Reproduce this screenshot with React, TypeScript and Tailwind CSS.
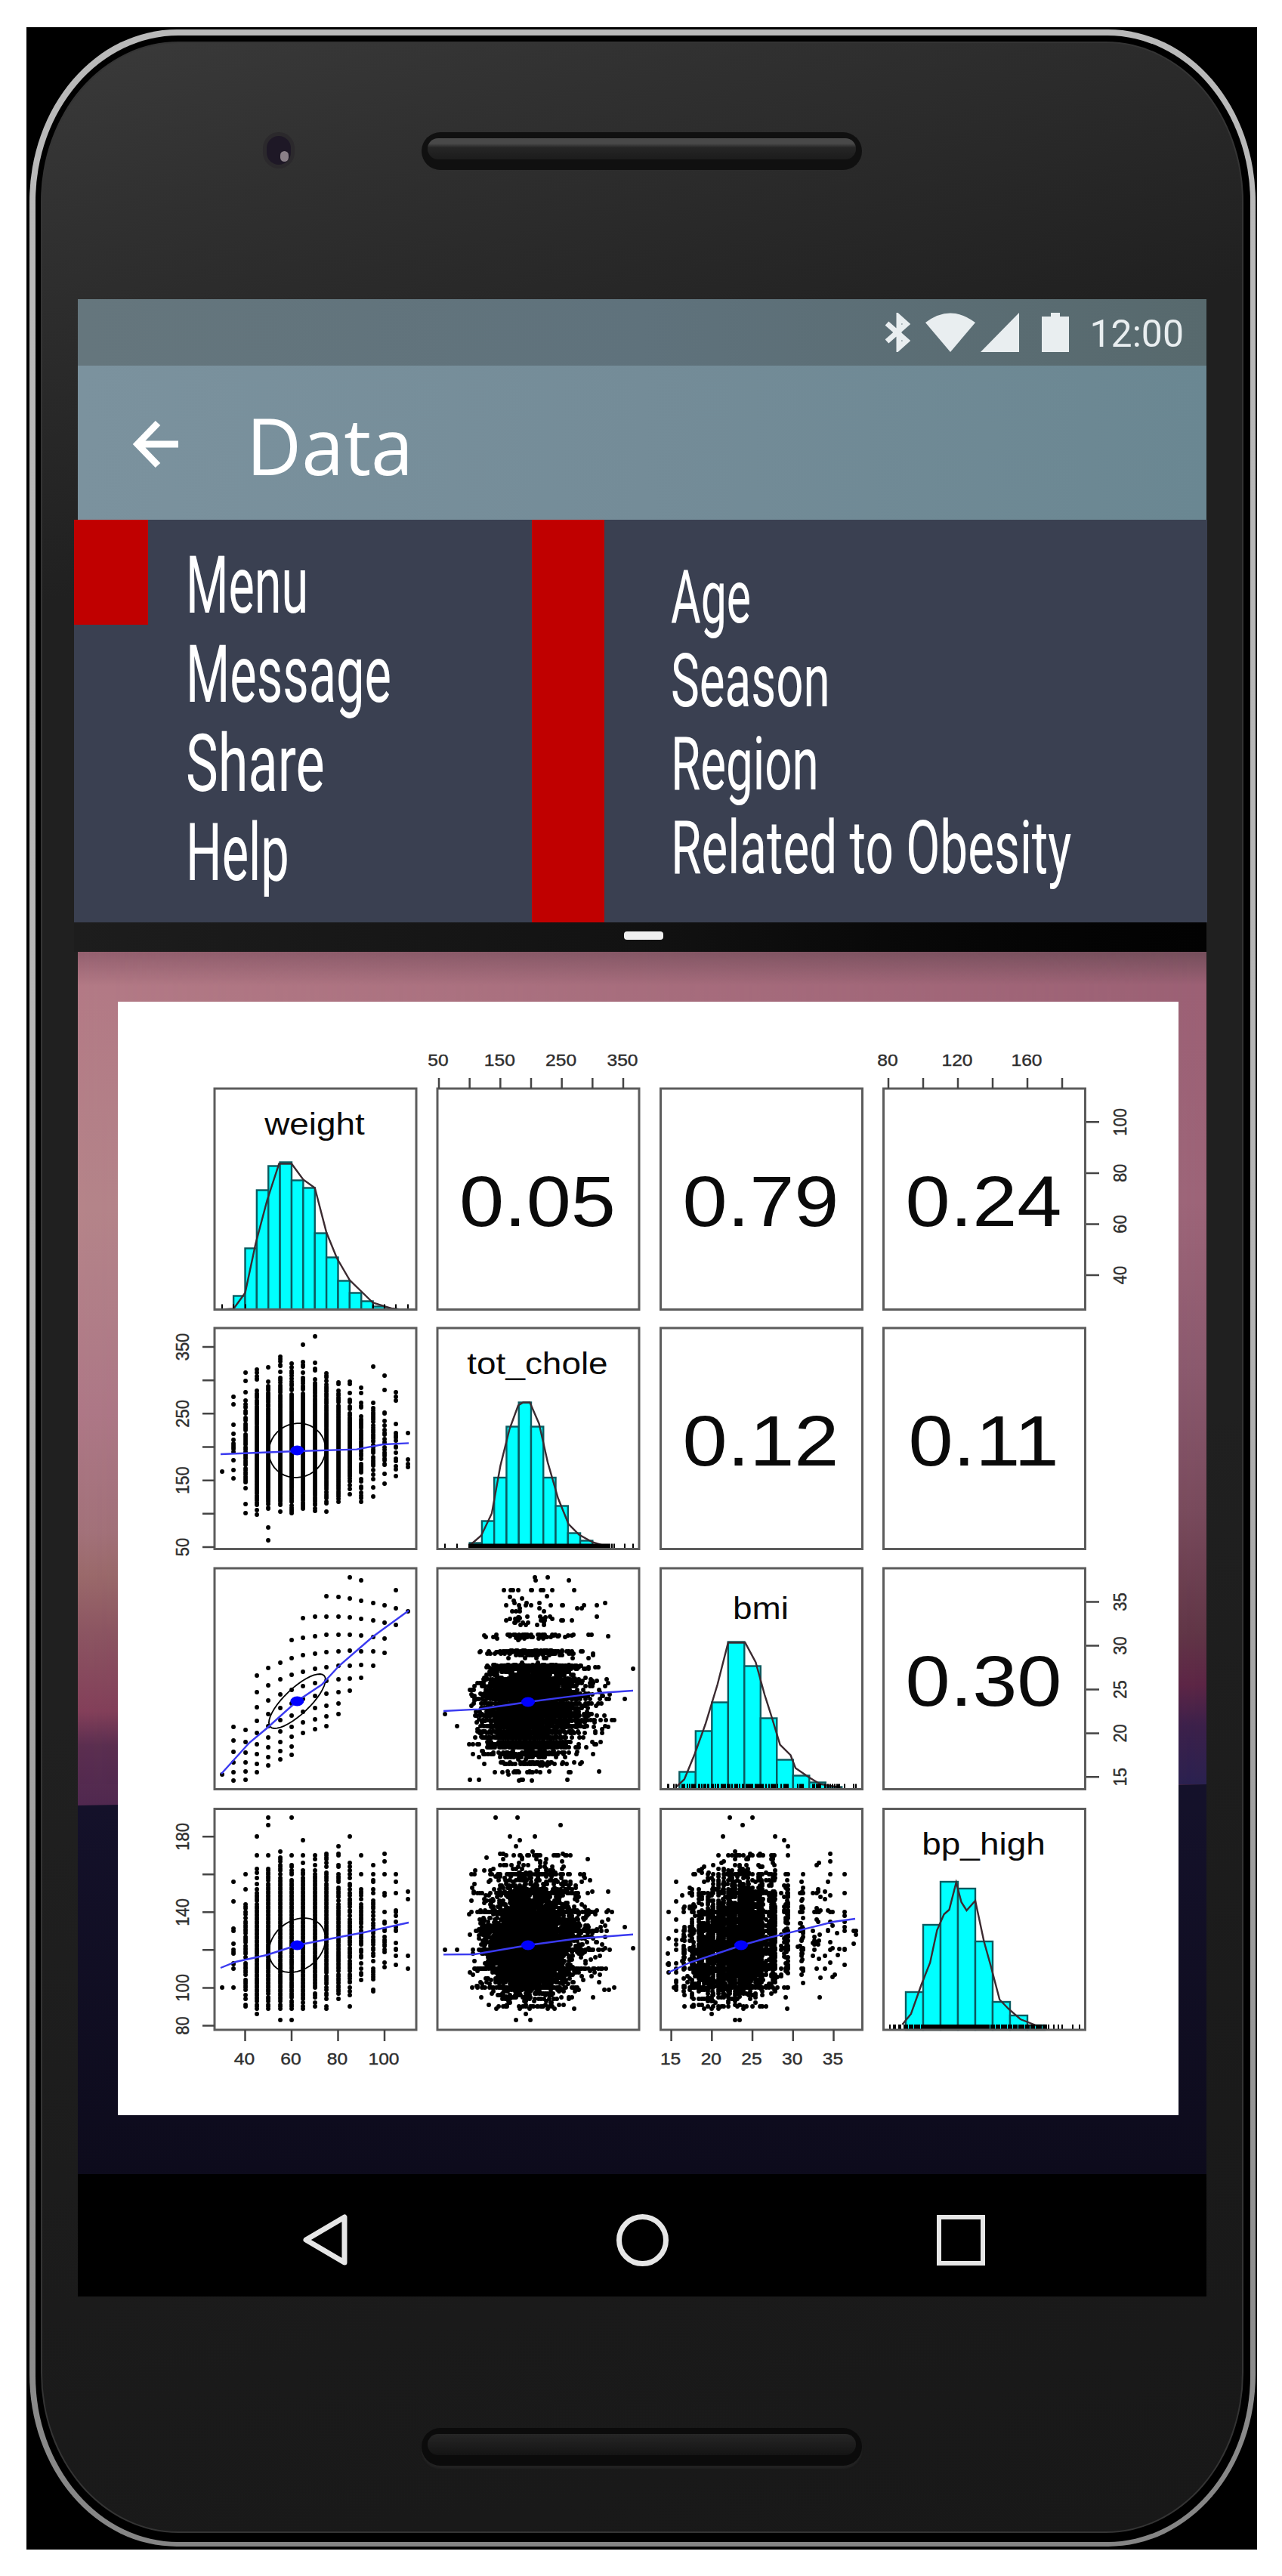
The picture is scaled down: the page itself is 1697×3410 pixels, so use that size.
/**
 * Phone mock-up of the "Data" screen: status bar, app bar, the two-column
 * filter menu and the health check-up correlation matrix underneath.
 */

import type { ReactNode } from 'react';

type Point = [number, number];

interface Subject {
  weight: number;
  height: number;
  chole: number;
  bp: number;
}

/* ---------------------------------------------------------------- data */

/** Small deterministic generator so that the plots never change. */
function createRandom(seed: number) {
  let s = seed;
  return () => {
    s = (s + 0x6d2b79f5) | 0;
    let t = Math.imul(s ^ (s >>> 15), 1 | s);
    t = (t + Math.imul(t ^ (t >>> 7), 61 | t)) ^ t;
    return ((t ^ (t >>> 14)) >>> 0) / 4294967296;
  };
}

/** weight → [shortest, tallest] in cm. Both are recorded in steps of 5. */
const HEIGHT_RANGE: Record<number, Point> = {
  30: [140, 140],
  35: [130, 155],
  40: [140, 165],
  45: [130, 170],
  50: [135, 175],
  55: [140, 180],
  60: [140, 185],
  65: [140, 180],
  70: [145, 185],
  75: [145, 190],
  80: [150, 190],
  85: [150, 185],
  90: [155, 185],
  95: [165, 185],
  100: [170, 185],
  105: [170, 180],
  110: [180, 180],
};

/** People per weight class, 35 kg upwards. */
const WEIGHT_COUNTS = [10, 90, 420, 780, 960, 1020, 900, 800, 480, 280, 140, 75, 60, 22, 14, 3];

const OUTLIERS: Subject[] = [
  { weight: 30, height: 140, chole: 163, bp: 100 },
  { weight: 110, height: 180, chole: 221, bp: 151 },
  { weight: 50, height: 155, chole: 80, bp: 120 },
  { weight: 50, height: 150, chole: 60, bp: 120 },
  { weight: 50, height: 150, chole: 142, bp: 190 },
  { weight: 50, height: 145, chole: 248, bp: 186 },
  { weight: 60, height: 155, chole: 178, bp: 190 },
  { weight: 45, height: 145, chole: 165, bp: 180 },
  { weight: 85, height: 175, chole: 206, bp: 180 },
  { weight: 80, height: 165, chole: 175, bp: 175 },
  { weight: 65, height: 150, chole: 182, bp: 178 },
  { weight: 70, height: 160, chole: 366, bp: 121 },
  { weight: 65, height: 165, chole: 353, bp: 132 },
  { weight: 90, height: 155, chole: 262, bp: 130 },
  { weight: 85, height: 150, chole: 206, bp: 128 },
  { weight: 105, height: 170, chole: 200, bp: 120 },
  { weight: 95, height: 165, chole: 321, bp: 133 },
  { weight: 55, height: 155, chole: 176, bp: 83 },
  { weight: 60, height: 160, chole: 199, bp: 83 },
  { weight: 45, height: 150, chole: 192, bp: 86 },
];

function buildSubjects(): Subject[] {
  const random = createRandom(20207);
  const normal = () =>
    Math.sqrt(-2 * Math.log(random() + 1e-9)) * Math.cos(2 * Math.PI * random());
  const list: Subject[] = [...OUTLIERS];

  WEIGHT_COUNTS.forEach((count, i) => {
    const weight = 35 + i * 5;
    const [lo, hi] = HEIGHT_RANGE[weight];
    for (let h = lo; h <= hi; h += 5) {
      const bp = Math.min(150, Math.max(95, 120 + normal() * 12));
      list.push({ weight, height: h, chole: 190 + normal() * 25, bp });
    }
    const typical = Math.min(hi - 7, 148 + (weight - 35) * 0.58);
    for (let n = 0; n < count; n++) {
      const raw = Math.round((typical + normal() * 6) / 5) * 5;
      const height = Math.min(hi, Math.max(lo, raw));
      const bmi = weight / (height / 100) ** 2;
      const chole = 187 + (bmi - 23.5) * 1.1 + normal() * 32 + Math.max(0, normal() * 32);
      let bp = 119.5 + (bmi - 23.5) * 1.2 + normal() * 12.5 + Math.max(0, normal() * 15);
      bp = random() < 0.4 ? Math.round(bp / 10) * 10 : Math.round(bp);
      if (chole < 98 || chole > 345 || bp < 89 || bp > 172) continue;
      if (bp === 90 && random() < 0.4) continue;
      list.push({ weight, height, chole: Math.round(chole), bp });
    }
  });
  return list;
}

const subjects = buildSubjects();
const bmiOf = (s: Subject) => s.weight / (s.height / 100) ** 2;

/* -------------------------------------------------------------- scales */

const COLS = [283, 578, 873.5, 1168.5];
const ROWS = [1441, 1758, 2076, 2394.5];
const PANEL_W = 267;
const PANEL_H = 292.5;

const xWeight = (v: number) => 323.5 + (v - 40) * 3.075;
const xChole = (v: number) => 580 + (v - 50) * 0.8133;
const xBmi = (v: number) => 887.6 + (v - 15) * 10.745;
const xBp = (v: number) => 1175 + (v - 80) * 2.3;
const yWeight = (v: number) => 1688 - (v - 40) * 3.378;
const yChole = (v: number) => 2048 - (v - 50) * 0.8833;
const yBmi = (v: number) => 2352.3 - (v - 15) * 11.585;
const yBp = (v: number) => 2681.4 - (v - 80) * 2.501;

/* ------------------------------------------------------------ matrix parts */

function Label({ x, y, size = 22, turn = false, children }: {
  x: number;
  y: number;
  size?: number;
  turn?: boolean;
  children: ReactNode;
}) {
  return (
    <text
      transform={`translate(${x} ${y}) scale(1.12 1)${turn ? ' rotate(-90)' : ''}`}
      fontSize={size}
      textAnchor="middle"
      fill={size < 30 ? '#2e2e2e' : '#0a0a0a'}
      stroke={size < 30 ? '#2e2e2e' : 'none'}
      strokeWidth="0.4"
    >
      {children}
    </text>
  );
}

interface HistogramProps {
  title: string;
  titleY: number;
  index: number;
  scale: (v: number) => number;
  start: number;
  step: number;
  bars: number[];
  curve: Point[];
  rug: number[];
}

function Histogram({ title, titleY, index, scale, start, step, bars, curve, rug }: HistogramProps) {
  const base = ROWS[index] + PANEL_H;
  const width = scale(step) - scale(0);
  const marks = [...new Set(rug.map((v) => Math.round(scale(v))))];
  return (
    <g>
      {bars.map((h, i) => (
        <rect
          key={i}
          x={scale(start + i * step)}
          y={base - h}
          width={width}
          height={h}
          fill="#00ffff"
          stroke="#0b5b60"
          strokeWidth="2.4"
        />
      ))}
      <polyline
        points={curve.map(([v, h]) => `${scale(v)},${base - h}`).join(' ')}
        fill="none"
        stroke="#3b2a30"
        strokeWidth="2.4"
      />
      <path d={marks.map((x) => `M${x} ${base}v-7`).join('')} stroke="#000" strokeWidth="2" />
      <Label x={COLS[index] + PANEL_W / 2 - 1} y={titleY} size={41}>{title}</Label>
    </g>
  );
}

interface ScatterProps {
  x: (s: Subject) => number;
  y: (s: Subject) => number;
  trend: Point[];
  center: Point;
  rho: number;
}

function Scatter({ x, y, trend, center, rho }: ScatterProps) {
  const dots = [...new Set(subjects.map((s) => `M${x(s).toFixed(0)} ${y(s).toFixed(0)}h.1`))];
  const phase = Math.acos(rho);
  const ellipse = Array.from({ length: 41 }, (_, i) => {
    const t = (i / 40) * Math.PI * 2;
    return `${center[0] + 37.5 * Math.cos(t)},${center[1] - 36 * Math.cos(t - phase)}`;
  });
  return (
    <g fill="none">
      <path d={dots.join('')} stroke="#000" strokeWidth="5.8" strokeLinecap="round" />
      <polygon points={ellipse.join(' ')} stroke="#000" strokeWidth="1.8" />
      <polyline points={trend.map((p) => p.join(',')).join(' ')} stroke="#3a3af0" strokeWidth="2.4" />
      <ellipse cx={center[0]} cy={center[1]} rx="9" ry="6.5" fill="#0000ff" />
    </g>
  );
}

const CORRELATIONS = [
  { row: 0, col: 1, value: '0.05' },
  { row: 0, col: 2, value: '0.79' },
  { row: 0, col: 3, value: '0.24' },
  { row: 1, col: 2, value: '0.12' },
  { row: 1, col: 3, value: '0.11' },
  { row: 2, col: 3, value: '0.30' },
];

interface AxisProps {
  side: 'top' | 'bottom' | 'left' | 'right';
  scale: (v: number) => number;
  ticks: number[];
  labels: number[];
}

function Axis({ side, scale, ticks, labels }: AxisProps) {
  const tick = (v: number) => {
    const p = scale(v);
    if (side === 'top') return `M${p} 1441v-14`;
    if (side === 'bottom') return `M${p} 2687v15`;
    if (side === 'left') return `M283 ${p}h-16`;
    return `M1437 ${p}h17`;
  };
  const place = (v: number): Point => {
    const p = scale(v);
    if (side === 'top') return [p - 1, 1411];
    if (side === 'bottom') return [p - 1, 2733];
    return [side === 'left' ? 249 : 1490, p];
  };
  return (
    <g>
      <path d={ticks.map(tick).join('')} stroke="#444" strokeWidth="2.5" />
      {labels.map((v) => {
        const [x, y] = place(v);
        return (
          <Label key={v} x={x} y={y} turn={side === 'left' || side === 'right'}>{v}</Label>
        );
      })}
    </g>
  );
}

function CorrelationMatrix() {
  return (
    <svg
      viewBox="155 1326 1404 1474"
      className="block h-[1474px] w-[1404px] bg-white font-['Liberation_Sans',sans-serif]"
    >
      <Scatter
        x={(s) => xWeight(s.weight)}
        y={(s) => yChole(s.chole)}
        center={[392.4, 1920]}
        rho={0.05}
        trend={[[291, 1925], [392, 1921], [471, 1918.6], [506, 1912], [540, 1910.4]]}
      />
      <Scatter
        x={(s) => xWeight(s.weight)}
        y={(s) => yBmi(bmiOf(s))}
        center={[392.4, 2252]}
        rho={0.79}
        trend={[[292, 2348], [329, 2307], [352, 2288], [392, 2252], [425, 2230], [448, 2205], [492, 2167], [540, 2132]]}
      />
      <Scatter
        x={(s) => xChole(s.chole)}
        y={(s) => yBmi(bmiOf(s))}
        center={[698, 2253]}
        rho={0.12}
        trend={[[586, 2265], [632, 2262.6], [664, 2258], [698, 2253], [747, 2246.6], [793, 2241], [837, 2238]]}
      />
      <Scatter
        x={(s) => xWeight(s.weight)}
        y={(s) => yBp(s.bp)}
        center={[392.4, 2575]}
        rho={0.24}
        trend={[[291, 2605], [311, 2597], [352, 2588], [392, 2575], [444, 2565], [481, 2558], [540, 2545]]}
      />
      <Scatter
        x={(s) => xChole(s.chole)}
        y={(s) => yBp(s.bp)}
        center={[698, 2575]}
        rho={0.11}
        trend={[[586, 2587.4], [627, 2587], [698, 2575], [761, 2566.5], [837, 2560.7]]}
      />
      <Scatter
        x={(s) => xBmi(bmiOf(s))}
        y={(s) => yBp(s.bp)}
        center={[980, 2575]}
        rho={0.3}
        trend={[[884, 2611], [912, 2598], [981, 2575], [1011, 2566.5], [1080, 2549.6], [1102, 2544], [1131, 2540]]}
      />

      <Histogram
        title="weight"
        titleY={1502}
        index={0}
        scale={xWeight}
        start={35}
        step={5}
        bars={[18, 81, 158, 190, 195, 171, 161, 101, 69, 38, 22, 11, 4, 1]}
        curve={[[30, 0], [35, 1], [40, 22], [44.5, 87], [49.5, 145], [54.6, 193], [60, 193], [65, 172], [70, 161], [75, 102], [79.5, 68], [85, 39], [90, 24], [95, 9], [103, 1.5], [107, 0]]}
        rug={[30, 35, 40, 95, 100, 105, 110]}
      />
      <Histogram
        title="tot_chole"
        titleY={1819}
        index={1}
        scale={xChole}
        start={100}
        step={20}
        bars={[8, 37, 94.5, 162, 194, 162, 94.5, 57, 21, 11, 4]}
        curve={[[102, 6], [119, 18], [136, 47], [150, 110], [165, 159], [179, 190], [187, 194], [198, 194], [213, 166], [227, 115], [244, 67], [261, 33], [278, 19], [300, 9], [328, 2]]}
        rug={subjects.map((s) => s.chole)}
      />
      <Histogram
        title="bmi"
        titleY={2143}
        index={2}
        scale={xBmi}
        start={16}
        step={2}
        bars={[23, 77, 115, 195, 163, 94, 39, 18, 9, 3]}
        curve={[[15.6, 3], [16.6, 13], [17.9, 47], [19.2, 86], [20.7, 139], [22, 194], [24.1, 194], [25.4, 168], [26.5, 125], [27.3, 98], [28.4, 59], [29.7, 45], [30.3, 28], [32, 15.5], [33.3, 7], [35.9, 2]]}
        rug={subjects.map(bmiOf)}
      />
      <Histogram
        title="bp_high"
        titleY={2455}
        index={3}
        scale={xBp}
        start={90}
        step={10}
        bars={[50, 139, 196, 187, 117, 37, 19, 6]}
        curve={[[88, 7], [93, 21], [99, 60], [104, 89], [108, 132], [112, 153], [115, 159], [119, 195], [122, 169], [125, 158], [130, 171], [135, 117], [139, 84], [144, 40], [149, 28], [156, 14], [166, 5]]}
        rug={[81, 83, 84, 86, 87, ...subjects.map((s) => s.bp)]}
      />

      {CORRELATIONS.map(({ row, col, value }) => (
        <Label key={value} x={COLS[col] + PANEL_W / 2 - 1} y={ROWS[row] + 181.5} size={95}>
          {value}
        </Label>
      ))}

      {ROWS.map((y) =>
        COLS.map((x) => (
          <rect
            key={`${x}-${y}`}
            x={x}
            y={y}
            width={PANEL_W}
            height={PANEL_H}
            fill="none"
            stroke="#5c5c5c"
            strokeWidth="3"
          />
        )),
      )}

      <Axis side="top" scale={xChole} ticks={[50, 100, 150, 200, 250, 300, 350]} labels={[50, 150, 250, 350]} />
      <Axis side="top" scale={xBp} ticks={[80, 100, 120, 140, 160, 180]} labels={[80, 120, 160]} />
      <Axis side="right" scale={yWeight} ticks={[40, 60, 80, 100]} labels={[40, 60, 80, 100]} />
      <Axis side="left" scale={yChole} ticks={[50, 100, 150, 200, 250, 300, 350]} labels={[50, 150, 250, 350]} />
      <Axis side="right" scale={yBmi} ticks={[15, 20, 25, 30, 35]} labels={[15, 20, 25, 30, 35]} />
      <Axis side="left" scale={yBp} ticks={[80, 100, 120, 140, 160, 180]} labels={[80, 100, 140, 180]} />
      <Axis side="bottom" scale={xWeight} ticks={[40, 60, 80, 100]} labels={[40, 60, 80, 100]} />
      <Axis side="bottom" scale={xBmi} ticks={[15, 20, 25, 30, 35]} labels={[15, 20, 25, 30, 35]} />
    </svg>
  );
}

/* --------------------------------------------------------------- screen */

function StatusBar() {
  return (
    <div className="flex h-[88px] items-center justify-end bg-linear-to-r from-[#65767d] via-[#5f727c] to-[#57696d] pr-[30px] text-[#e9eef0]">
      <svg viewBox="0 0 33 52" className="mr-[20px] h-[52px] w-[33px]" fill="none" stroke="currentColor" strokeWidth="7">
        <path d="M2 14L28 37L18 46V6L28 15L2 38" />
      </svg>
      <svg viewBox="0 0 66 52" className="mr-[7px] h-[52px] w-[66px]" fill="currentColor">
        <path d="M0 13Q33 -12 66 13L33 52Z" />
      </svg>
      <svg viewBox="0 0 51 52" className="mr-[30px] h-[52px] w-[51px]" fill="currentColor">
        <path d="M51 0V52H0Z" />
      </svg>
      <svg viewBox="0 0 36 52" className="mr-[27px] h-[52px] w-[36px]" fill="currentColor">
        <path d="M12 0H24V5H36V52H0V5H12Z" />
      </svg>
      <span className="pt-[3px] font-['Roboto',sans-serif] text-[50px] leading-none">12:00</span>
    </div>
  );
}

function AppBar() {
  return (
    <div className="flex h-[204px] items-center bg-linear-to-r from-[#7b929e] via-[#748c98] to-[#6a8792] pt-[4px] pl-[69px] text-white">
      <svg viewBox="0 0 68 68" className="h-[68px] w-[68px]" fill="none" stroke="currentColor" strokeWidth="9">
        <path d="M64 34H10M37 6L10 34L37 62" />
      </svg>
      <h1 className="ml-[86px] origin-left scale-x-[.96] font-['Open_Sans',sans-serif] text-[105px] leading-none">Data</h1>
    </div>
  );
}

function FilterMenu() {
  return (
    <div className="-mr-px -ml-[5px] flex h-[533px] bg-[#3a4051]">
      <div className="h-[139px] w-[98px] shrink-0 bg-[#c00000]" />
      <ul className="w-[508px] shrink-0 pt-[28px] pl-[50px] font-['Roboto',sans-serif] text-[106px] leading-[118px] whitespace-nowrap text-white">
        <li className="origin-left scale-x-[.61]">Menu</li>
        <li className="origin-left scale-x-[.63]">Message</li>
        <li className="origin-left scale-x-[.68]">Share</li>
        <li className="origin-left scale-x-[.63]">Help</li>
      </ul>
      <div className="w-[96px] shrink-0 bg-[#c00000]" />
      <ul className="shrink-0 pt-[48px] pl-[88px] font-['Roboto',sans-serif] text-[98px] leading-[110.7px] whitespace-nowrap text-white">
        <li className="w-0 origin-left scale-x-[.62]">Age</li>
        <li className="w-0 origin-left scale-x-[.65]">Season</li>
        <li className="w-0 origin-left scale-x-[.65]">Region</li>
        <li className="w-0 origin-left scale-x-[.67]">Related to Obesity</li>
      </ul>
    </div>
  );
}

function Wallpaper({ children }: { children: ReactNode }) {
  return (
    <div className="relative h-[1618px] bg-linear-to-b from-[#14112a] from-70% to-[#0d0b1c]">
      <div className="absolute top-0 left-0 h-[1130px] w-full bg-[linear-gradient(to_bottom,#94606f_0%,#b37a86_4%,#b5858a_30%,#ae7887_54%,#a3727a_68%,#9b6a6b_73%,#8c5562_80%,#84405a_89%,#5c2f50_93%,#50284f_100%)] [clip-path:polygon(0_0,100%_0,100%_1102px,0_1130px)]" />
      <div className="absolute top-0 right-0 h-[1102px] w-full bg-[linear-gradient(to_bottom,#744e5b_0%,#9b6074_4%,#9c6478_30%,#8a596d_50%,#784a5c_67%,#603546_82%,#5c2545_88%,#3b204a_93%,#2a2150_100%)] [mask-image:linear-gradient(to_right,transparent,black)]" />
      <div className="relative flex pt-[66px] pl-[53px]">{children}</div>
    </div>
  );
}

function NavigationBar() {
  return (
    <div className="flex h-[162px] items-center bg-black pt-[12px] text-[#e6e6e6]">
      <svg viewBox="0 0 64 72" className="ml-[295px] h-[72px] w-[64px]" fill="none" stroke="currentColor" strokeWidth="7" strokeLinejoin="round">
        <path d="M58 6V66L7 36Z" />
      </svg>
      <div className="ml-[354px] h-[69px] w-[69px] rounded-full border-[7px] border-current" />
      <div className="ml-[355px] h-[67px] w-[64px] border-[6px] border-current" />
    </div>
  );
}

function Speaker({ dim = false }: { dim?: boolean }) {
  return (
    <div className={`h-[50px] w-[583px] rounded-full p-[8px] ${dim ? 'bg-[#0b0b0b] shadow-[0_4px_2px_#222222]' : 'bg-[#101010]'}`}>
      <div className={`h-[28px] rounded-full ${dim ? 'bg-linear-to-b from-[#262626] to-[#141414]' : 'bg-linear-to-b from-[#494949] from-25% via-[#252525] via-45% to-[#1c1c1c]'}`} />
    </div>
  );
}

export default function App() {
  return (
    <div className="h-[3410px] w-[1697px] bg-white pt-[36px] pl-[35px]">
      <div className="h-[3339px] w-[1629px] bg-black pt-[3px] pl-[4px]">
        <div className="h-[3332px] w-[1623px] rounded-[195px/228px] bg-linear-to-b from-[#b9b9b9] via-[#b4b4b4] to-[#858585] pt-[8px] pr-[7px] pb-[6px] pl-[8px]">
          <div className="h-full rounded-[189px/220px] bg-black pt-[8px] pr-[9px] pb-[12px] pl-[7px]">
            <div className="flex h-full flex-col rounded-[182px/212px] border-2 border-[#343434] bg-linear-[165deg,#3a3a3a_0%,#303030_7%,#202020_20%,#202020_60%,#1a1a1a_85%,#181818_100%] pl-[47px]">
              <div className="flex h-[339px] pt-[118px]">
                <div className="ml-[245px] flex h-[48px] w-[42px] items-center justify-center rounded-full bg-[#2b292c]">
                  <div className="flex h-[38px] w-[32px] items-end justify-end rounded-full bg-[#1e1826] pr-[3px] pb-[4px]">
                    <div className="h-[14px] w-[11px] rounded-full bg-[#8a8088]" />
                  </div>
                </div>
                <div className="ml-[168px]">
                  <Speaker />
                </div>
              </div>

              <div className="w-[1494px]">
                <StatusBar />
                <AppBar />
                <FilterMenu />
                <div className="-ml-[5px] flex h-[39px] justify-center bg-linear-to-r from-[#1d1d1d] via-[#121212] to-[#020202] pt-[12px] pl-[8px]">
                  <div className="h-[11px] w-[52px] rounded-sm bg-[#f0f0f0]" />
                </div>
                <Wallpaper>
                  <CorrelationMatrix />
                </Wallpaper>
                <NavigationBar />
              </div>

              <div className="mt-[174px] ml-[455px]">
                <Speaker dim />
              </div>
            </div>
          </div>
        </div>
      </div>
    </div>
  );
}
